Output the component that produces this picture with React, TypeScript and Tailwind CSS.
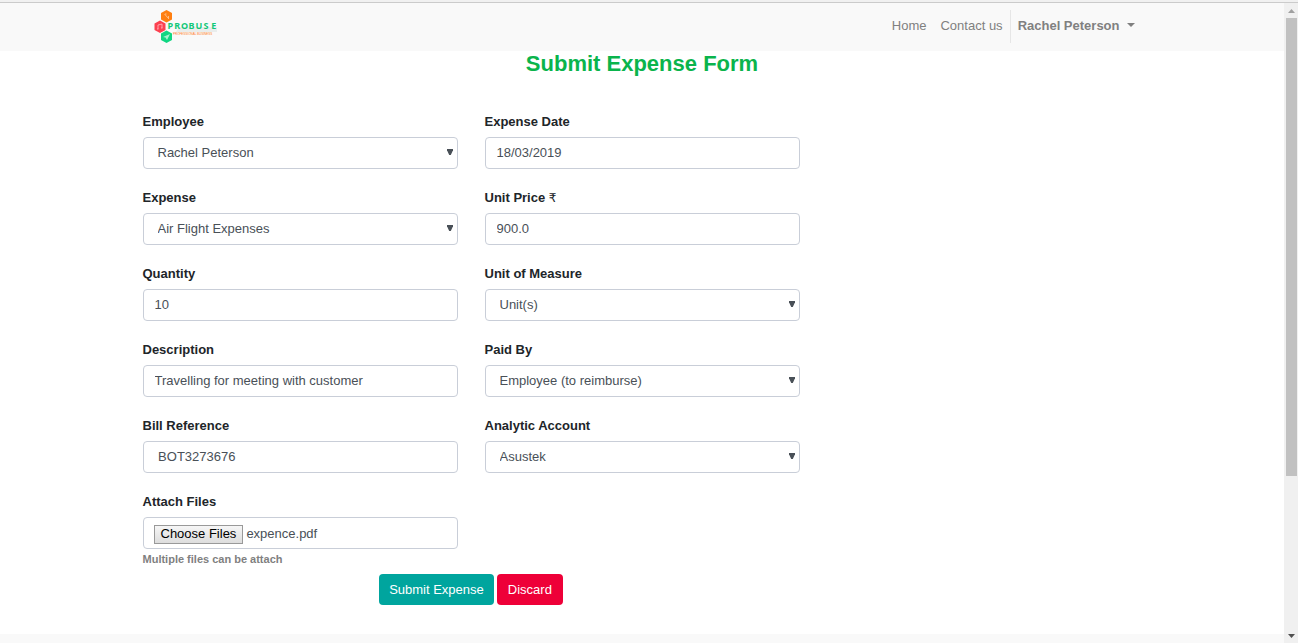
import { useEffect, useRef, type ReactNode } from "react";

const control =
  "block h-8 w-full rounded border border-[#c9ced8] bg-white text-[13px] leading-5 text-[#495057] outline-none focus:border-[#00a09d]";

function Field({ id, label, children }: { id: string; label: ReactNode; children: ReactNode }) {
  return (
    <div>
      <label htmlFor={id} className="mb-[5px] block font-bold leading-5">
        {label}
      </label>
      {children}
    </div>
  );
}

function TextField({ id, label, value }: { id: string; label: ReactNode; value: string }) {
  return (
    <Field id={id} label={label}>
      <input id={id} name={id} type="text" defaultValue={value} className={`${control} px-[11px] pb-0.5`} />
    </Field>
  );
}

function SelectField({ id, label, value }: { id: string; label: ReactNode; value: string }) {
  return (
    <Field id={id} label={label}>
      <div className="relative">
        <select id={id} name={id} defaultValue={value} className={`${control} appearance-none px-3.5`}>
          <option value={value}>{value}</option>
        </select>
        <svg viewBox="0 0 6 6" className="pointer-events-none absolute right-[5px] top-3 h-1.5 w-1.5" aria-hidden="true">
          <path d="M0 0h6v1.200L3.800 6H2.200L0 1.200z" fill="#495057" />
        </svg>
      </div>
    </Field>
  );
}

function FileField() {
  const ref = useRef<HTMLInputElement>(null);

  useEffect(() => {
    const transfer = new DataTransfer();
    transfer.items.add(new File([""], "expence.pdf", { type: "application/pdf" }));
    if (ref.current) ref.current.files = transfer.files;
  }, []);

  return (
    <Field id="attachments" label="Attach Files">
      <input
        ref={ref}
        id="attachments"
        name="attachments"
        type="file"
        multiple
        className={`${control} px-2.5 py-1.5 file:mr-[3px] file:h-[19px] file:border file:border-solid file:border-[#999] file:bg-linear-to-b file:from-[#f6f6f6] file:to-[#dddddd] file:px-1.5 file:py-0 file:text-[13px] file:leading-4 file:text-black`}
      />
      <small className="block text-[11px] font-bold leading-5 text-[#808080]">Multiple files can be attach</small>
    </Field>
  );
}

function Logo() {
  return (
    <svg viewBox="0 0 64 34" className="h-[34px] w-16" role="img" aria-label="Probuse Professional Business">
      <path d="M25 17h38v5H22z" fill="#e9edec" />
      <path d="M12.500 0l5.500 3v6.500l-5.500 3-5.500-3V3z" fill="#ff7f11" />
      <path d="M6 10.500l5.500 3V20L6 23 .5 20v-6.500z" fill="#fc4150" />
      <path d="M12.500 20.500l5.500 3V30l-5.500 3L7 30v-6.500z" fill="#0fd682" />
      <path d="M10.500 4l4 4.500M11 4l1.500 0M14.500 6v3" stroke="#ffc48e" strokeWidth=".9" fill="none" />
      <path d="M4 19v-4l4-1v4M3 19h1.500M7 18h1.500" stroke="#ffb0b6" strokeWidth=".9" fill="none" />
      <path d="M9 27l7-3-3 6-1.500-2.500z" fill="#a5f2cf" />
      <text
        x="13.500 20.200 27 34.500 41.500 49.500 57.200"
        y="19"
        fontFamily="Noto Sans, sans-serif"
        fontWeight="700"
        fontSize="9"
        fill="#12c878"
      >
        PROBUSE
      </text>
      <text x="19" y="24.500" fontFamily="Liberation Sans, sans-serif" fontSize="3" fill="#ff7a1a">
        PROFESSIONAL BUSINESS
      </text>
    </svg>
  );
}

function Header() {
  return (
    <header className="bg-[#f9f9f9]">
      <nav className="mx-auto flex h-12 w-full max-w-[999px] items-center justify-between">
        <a href="#home" className="ml-[11px]">
          <Logo />
        </a>
        <div className="flex items-center pb-0.5 text-[#808080]">
          <a href="#home" className="px-[7px]">
            Home
          </a>
          <a href="#contact" className="px-[7px]">
            Contact us
          </a>
          <button
            type="button"
            className="flex h-[33px] items-center gap-[7px] border-l border-[#e6e6e6] px-[7px] font-bold"
          >
            Rachel Peterson
            <svg viewBox="0 0 8 4" className="-mt-0.5 h-1 w-2" aria-hidden="true">
              <path d="M0 0h8L4 4z" fill="currentColor" />
            </svg>
          </button>
        </div>
      </nav>
    </header>
  );
}

function ScrollRail() {
  return (
    <div className="flex w-3.5 shrink-0 flex-col items-center bg-[#f0f0f0] pl-0.5 pr-px" aria-hidden="true">
      <svg viewBox="0 0 11 15" className="h-[15px] w-[11px]">
        <path d="M2 10l3.500-4L9 10z" fill="#a0a0a0" />
      </svg>
      <div className="w-full flex-[75] bg-[#c1c1c1]" />
      <div className="flex-[25]" />
      <svg viewBox="0 0 11 15" className="h-[15px] w-[11px]">
        <path d="M2 6h7l-3.500 4z" fill="#505050" />
      </svg>
    </div>
  );
}

export default function App() {
  return (
    <div className="flex min-h-screen flex-col bg-white font-['Liberation_Sans',Arial,sans-serif] text-[13px] leading-5 text-[#212529]">
      <div className="h-[3px] border-b border-[#cbcbcb] bg-[#f1f1f1]" />
      <div className="flex flex-1">
        <div className="flex min-w-0 flex-1 flex-col">
          <Header />
          <main className="mx-auto w-full max-w-[999px]">
            <h1 className="text-center text-[22px] font-bold leading-[26px] text-[#0ab44c]">Submit Expense Form</h1>
            <form className="pb-[29px] pt-[35px]" onSubmit={(event) => event.preventDefault()}>
              <div className="grid grid-cols-3 gap-x-[27px]">
                <div className="col-span-2 grid grid-cols-2 gap-x-[27px] gap-y-[19px]">
                  <SelectField id="employee" label="Employee" value="Rachel Peterson" />
                  <TextField id="date" label="Expense Date" value="18/03/2019" />
                  <SelectField id="expense" label="Expense" value="Air Flight Expenses" />
                  <TextField
                    id="price"
                    label={
                      <>
                        Unit Price <span className="font-['DejaVu_Sans',sans-serif] text-xs font-normal leading-none">₹</span>
                      </>
                    }
                    value="900.0"
                  />
                  <TextField id="quantity" label="Quantity" value="10" />
                  <SelectField id="unit" label="Unit of Measure" value="Unit(s)" />
                  <TextField id="description" label="Description" value="Travelling for meeting with customer" />
                  <SelectField id="paid-by" label="Paid By" value="Employee (to reimburse)" />
                  <TextField id="reference" label="Bill Reference" value=" BOT3273676" />
                  <SelectField id="account" label="Analytic Account" value="Asustek" />
                  <FileField />
                </div>
                <div className="col-span-2 mt-[5px] flex justify-center gap-[3px]">
                  <button type="submit" className="h-[31px] rounded bg-[#00a59e] px-2.5 text-white">
                    Submit Expense
                  </button>
                  <button type="reset" className="h-[31px] rounded bg-[#ee0038] px-[11px] text-white">
                    Discard
                  </button>
                </div>
              </div>
            </form>
          </main>
          <footer className="flex-1 bg-[#f9f9f9]" />
        </div>
        <ScrollRail />
      </div>
    </div>
  );
}
